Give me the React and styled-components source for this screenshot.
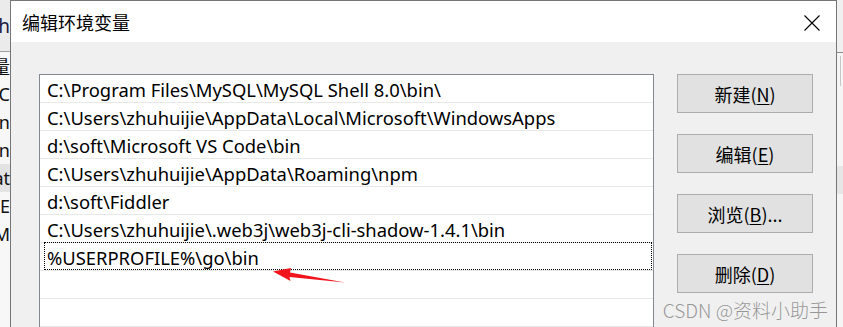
import React from 'react';
import styled, {createGlobalStyle} from 'styled-components';

const GlobalStyle = createGlobalStyle`
  html, body {
    margin: 0;
    padding: 0;
    background: #f0f0f0;
  }
  body {
    font-family: "Noto Sans", "Noto Sans CJK SC", sans-serif;
  }
`;

const Screen = styled.div`
  position: relative;
  display: flex;
  width: 843px;
  height: 327px;
  overflow: hidden;
  background: #f3f3f3;
`;

const BehindLeft = styled.div`
  width: 10px;
  flex-shrink: 0;
  overflow: hidden;
  display: flex;
  flex-direction: column;
  background: #f7f7f7;
`;

const BehindHead = styled.div`
  height: 51px;
  border-bottom: 1px solid #a0a0a0;
  background: #ebebeb;
  display: flex;
  justify-content: flex-end;
  align-items: center;
  font-size: 19px;
  color: #1a1a40;
`;

const BehindLine = styled.div`
  height: 28px;
  display: flex;
  justify-content: flex-end;
  align-items: center;
  font-size: 18px;
  color: #111;
  white-space: nowrap;
  background: ${({active}) => (active ? '#e3e3e3' : 'transparent')};
`;

const BehindRight = styled.div`
  width: 6px;
  flex-shrink: 0;
  display: flex;
  flex-direction: column;
  background: #f5f5f5;
`;

const RightHead = styled.div`
  height: 52px;
  border-bottom: 1px solid #8c8c8c;
  background: #f0f0f0;
`;

const RightBar = styled.div`
  margin: 3px 0 0 3px;
  width: 1px;
  height: 30px;
  background: #c8c8c8;
`;

const RightShade = styled.div`
  margin-top: 80px;
  height: 28px;
  background: #e6e6e6;
`;

const Dialog = styled.div`
  width: 825px;
  flex-shrink: 0;
  border: 1px solid #767676;
  border-bottom: none;
  display: flex;
  flex-direction: column;
  background: #f0f0f0;
`;

const TitleBar = styled.div`
  height: 43px;
  background: #fff;
  display: flex;
  align-items: center;
  justify-content: space-between;
  padding: 0 16px 0 11px;
`;

const Title = styled.div`
  font-family: "Noto Sans CJK SC", sans-serif;
  font-size: 18px;
  color: #000;
  padding-top: 1px;
`;

const Close = styled.svg`
  margin-top: 2px;
`;

const Body = styled.div`
  flex: 1;
  display: flex;
  gap: 23px;
  padding: 32px 0 0 28px;
`;

const List = styled.div`
  width: 613px;
  flex-shrink: 0;
  border: 1px solid #828790;
  border-bottom: none;
  background: #fff;
  display: flex;
  flex-direction: column;
`;

const Row = styled.div`
  height: 27px;
  flex-shrink: 0;
  display: flex;
  border-bottom: 1px solid #e8e8e8;
`;

const Cell = styled.div`
  flex: 1;
  margin: 0 1px 0 4px;
  padding: 2px 0 0 2px;
  display: flex;
  align-items: center;
  font-size: 18.4px;
  color: #000;
  white-space: nowrap;
  border: 1px dotted ${({focused}) => (focused ? '#000' : 'transparent')};
  margin-top: ${({focused}) => (focused ? '-1px' : '0')};
`;

const Buttons = styled.div`
  display: flex;
  flex-direction: column;
  gap: 21px;
`;

const Button = styled.button`
  width: 136px;
  height: 39px;
  border: 1px solid #adadad;
  background: #e1e1e1;
  font-family: "Noto Sans CJK SC", sans-serif;
  font-size: 18px;
  color: #000;
  padding: 0;
  display: flex;
  align-items: center;
  justify-content: center;

  u {
    text-underline-offset: 2px;
  }
`;

const Watermark = styled.div`
  position: absolute;
  right: 15px;
  top: 296px;
  font-family: "Noto Sans CJK SC", sans-serif;
  font-size: 19px;
  font-weight: 300;
  color: rgba(120, 120, 120, 0.75);
  white-space: nowrap;
`;

const Overlay = styled.svg`
  position: absolute;
  left: 0;
  top: 0;
  pointer-events: none;
`;

const paths = [
    'C:\\Program Files\\MySQL\\MySQL Shell 8.0\\bin\\',
    'C:\\Users\\zhuhuijie\\AppData\\Local\\Microsoft\\WindowsApps',
    'd:\\soft\\Microsoft VS Code\\bin',
    'C:\\Users\\zhuhuijie\\AppData\\Roaming\\npm',
    'd:\\soft\\Fiddler',
    'C:\\Users\\zhuhuijie\\.web3j\\web3j-cli-shadow-1.4.1\\bin',
    '%USERPROFILE%\\go\\bin',
    '',
    '',
];

const behind = ['变量', 'C', 'on', 'on', 'at', 'E', 'M'];

const App = () => {
    return (
        <Screen>
            <GlobalStyle/>
            <BehindLeft>
                <BehindHead>h</BehindHead>
                {behind.map((t, i) => (
                    <BehindLine key={i} active={i === 4}>{t}</BehindLine>
                ))}
            </BehindLeft>
            <Dialog>
                <TitleBar>
                    <Title>编辑环境变量</Title>
                    <Close width="16" height="16" viewBox="0 0 16 16">
                        <path d="M0.5 0.5 L15.5 15.5 M15.5 0.5 L0.5 15.5" stroke="#000" strokeWidth="1.1"/>
                    </Close>
                </TitleBar>
                <Body>
                    <List>
                        {paths.map((p, i) => (
                            <Row key={i}>
                                <Cell focused={i === 6}>{p}</Cell>
                            </Row>
                        ))}
                    </List>
                    <Buttons>
                        <Button>新建(<u>N</u>)</Button>
                        <Button>编辑(<u>E</u>)</Button>
                        <Button>浏览(<u>B</u>)...</Button>
                        <Button>删除(<u>D</u>)</Button>
                    </Buttons>
                </Body>
            </Dialog>
            <BehindRight>
                <RightHead/>
                <RightBar/>
                <RightShade/>
            </BehindRight>
            <Watermark>CSDN @资料小助手</Watermark>
            <Overlay width="843" height="327">
                <polygon
                    points="273,271.5 291,268 290,272.5 345,282.5 289.5,277 290.5,281"
                    fill="#f2141c"
                />
            </Overlay>
        </Screen>
    );
};

export default App;
